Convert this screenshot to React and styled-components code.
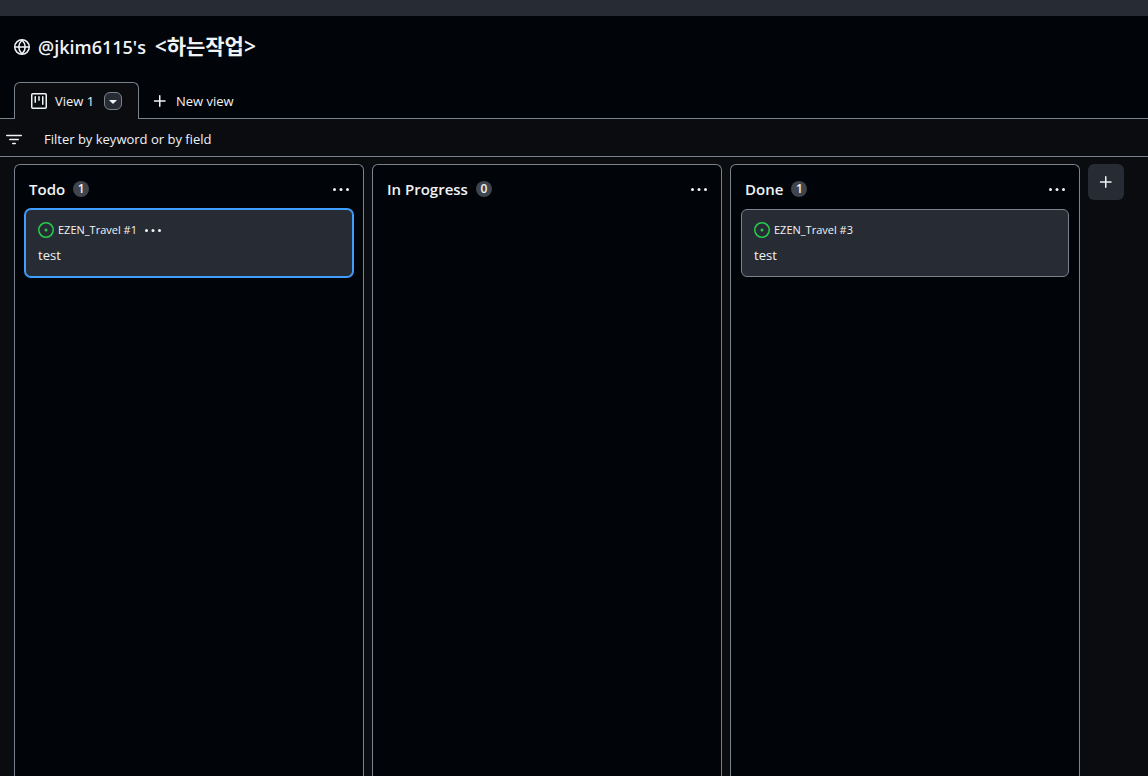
import React from "react";
import styled, { createGlobalStyle, css } from "styled-components";

const color = {
  canvas: "#0a0c10",
  inset: "#010409",
  raised: "#272b33",
  counter: "#3f444d",
  border: "#7a828e",
  text: "#f0f3f6",
  accent: "#409eff",
  open: "#26cd4d",
};

const GlobalStyle = createGlobalStyle`
  *, *::before, *::after { box-sizing: border-box; }
  body {
    margin: 0;
    background: ${color.canvas};
    color: ${color.text};
    font-family: "Open Sans", "Noto Sans CJK KR", sans-serif;
    font-size: 13px;
    line-height: 20px;
  }
  button, input { font: inherit; color: inherit; }
  svg { display: block; flex: none; }
`;

const Icon = styled.svg.attrs({ viewBox: "0 0 16 16", "aria-hidden": true })`
  width: 16px;
  height: 16px;
  fill: none;
  stroke: currentColor;
  stroke-width: 1.5;
  stroke-linecap: round;
`;

const Page = styled.div`
  display: flex;
  flex-direction: column;
  min-height: 100vh;
`;

const TopStrip = styled.div`
  height: 16px;
  background: ${color.raised};
`;

const Header = styled.header`
  display: flex;
  align-items: center;
  gap: 8px;
  height: 66px;
  padding: 0 14px 4px;
  background: ${color.inset};
`;

const Title = styled.h1`
  margin: 0;
  font-size: 18px;
  font-weight: 600;
  line-height: 30px;
`;

const ProjectName = styled.span`
  margin-left: 4px;
  font-size: 21px;
  line-height: 20px;
`;

const ViewTabs = styled.nav`
  display: flex;
  height: 37px;
  padding: 0 14px;
  background: ${color.inset};
  box-shadow: inset 0 -1px ${color.border};
`;

const ViewTab = styled.div`
  display: flex;
  align-items: center;
  justify-content: space-between;
  width: 125px;
  padding: 0 16px;
  border: 1px solid ${color.border};
  border-bottom: 0;
  border-radius: 6px 6px 0 0;
  background: ${color.canvas};
`;

const PlainButton = styled.button`
  display: flex;
  align-items: center;
  gap: 8px;
  padding: 0;
  border: 0;
  background: none;
  cursor: pointer;
`;

const NewViewButton = styled(PlainButton)`
  padding: 0 13px;
`;

const MenuToggle = styled(PlainButton)`
  justify-content: center;
  width: 18px;
  height: 18px;
  border: 1px solid ${color.border};
  border-radius: 6px;
  background: ${color.raised};
`;

const FilterBar = styled.label`
  display: flex;
  align-items: center;
  gap: 22px;
  height: 38px;
  padding: 2px 6px 0;
  border-bottom: 1px solid ${color.border};
`;

const FilterInput = styled.input`
  flex: 1;
  min-width: 0;
  padding: 0;
  border: 0;
  outline: 0;
  background: none;
  &::placeholder {
    color: ${color.text};
    opacity: 1;
  }
`;

const Board = styled.main`
  display: flex;
  flex: 1;
  gap: 8px;
  padding: 7px 14px 0;
  overflow-x: auto;
`;

const Column = styled.section`
  flex: 0 0 350px;
  padding: 0 10px;
  border: 1px solid ${color.border};
  border-bottom: 0;
  border-radius: 6px 6px 0 0;
  background: ${color.inset};
`;

const ColumnHeader = styled.header`
  display: flex;
  align-items: center;
  gap: 8px;
  height: 44px;
  padding: 4px 4px 0;
`;

const ColumnName = styled.h2`
  margin: 0;
  font-size: 15px;
  font-weight: 600;
  line-height: 24px;
`;

const Counter = styled.span`
  min-width: 16px;
  border-radius: 8px;
  background: ${color.counter};
  font-size: 12px;
  font-weight: 600;
  line-height: 16px;
  text-align: center;
`;

const ColumnMenu = styled(PlainButton)`
  margin-left: auto;
`;

const Card = styled.article`
  height: 68px;
  padding: 10px 12px;
  border: 1px solid ${color.border};
  border-radius: 6px;
  background: ${color.raised};
  ${(p) =>
    p.$selected &&
    css`
      border-color: ${color.accent};
      box-shadow: 0 0 0 1px ${color.accent};
    `}
`;

const CardMeta = styled.div`
  display: flex;
  align-items: center;
  gap: 4px;
  margin-bottom: 5px;
  font-size: 11px;
`;

const OpenIcon = styled(Icon)`
  color: ${color.open};
`;

const CardMenu = styled(PlainButton)`
  padding: 0 4px;
`;

const CardTitle = styled.a`
  display: block;
  color: ${color.text};
  text-decoration: none;
`;

const AddColumn = styled(PlainButton)`
  flex: none;
  justify-content: center;
  width: 36px;
  height: 36px;
  border-radius: 6px;
  background: ${color.raised};
`;

const GlobeIcon = () => (
  <Icon>
    <circle cx="8" cy="8" r="7.25" />
    <path d="M1 8h14M8 1C3.9 5.4 3.9 10.6 8 15C12.1 10.6 12.1 5.4 8 1Z" />
  </Icon>
);

const ProjectIcon = () => (
  <Icon>
    <rect x="0.75" y="0.75" width="14.5" height="14.5" rx="1" />
    <path d="M4.25 3.75v5.5M8 3.75v3.5M11.75 3.75v7.5" />
  </Icon>
);

const PlusIcon = () => (
  <Icon>
    <path d="M7.75 2.75v10.5M2.5 8h10.5" />
  </Icon>
);

const FilterIcon = () => (
  <Icon>
    <path d="M0.75 4.5h14.5M3.75 8.5h8.5M6.75 12.5h2.5" />
  </Icon>
);

const DotsIcon = () => (
  <Icon>
    <g fill="currentColor" stroke="none">
      <circle cx="1.5" cy="8.5" r="1.5" />
      <circle cx="8" cy="8.5" r="1.5" />
      <circle cx="14.5" cy="8.5" r="1.5" />
    </g>
  </Icon>
);

const CaretIcon = () => (
  <Icon>
    <path
      fill="currentColor"
      stroke="none"
      d="m4.4 7.4 3.4 3.4c.1.1.3.1.4 0l3.4-3.4c.2-.2.1-.4-.2-.4H4.6c-.3 0-.4.2-.2.4Z"
    />
  </Icon>
);

const columns = [
  { name: "Todo", cards: [{ ref: "EZEN_Travel #1", title: "test", selected: true }] },
  { name: "In Progress", cards: [] },
  { name: "Done", cards: [{ ref: "EZEN_Travel #3", title: "test" }] },
];

export default function App() {
  return (
    <Page>
      <GlobalStyle />
      <TopStrip />
      <Header>
        <GlobeIcon />
        <Title>
          {"@jkim6115's "}
          <ProjectName>{"<하는작업>"}</ProjectName>
        </Title>
      </Header>
      <ViewTabs>
        <ViewTab>
          <PlainButton>
            <ProjectIcon />
            View 1
          </PlainButton>
          <MenuToggle aria-label="View options">
            <CaretIcon />
          </MenuToggle>
        </ViewTab>
        <NewViewButton>
          <PlusIcon />
          New view
        </NewViewButton>
      </ViewTabs>
      <FilterBar>
        <FilterIcon />
        <FilterInput
          type="text"
          aria-label="Filter by keyword or by field"
          placeholder="Filter by keyword or by field"
        />
      </FilterBar>
      <Board>
        {columns.map((column) => (
          <Column key={column.name}>
            <ColumnHeader>
              <ColumnName>{column.name}</ColumnName>
              <Counter>{column.cards.length}</Counter>
              <ColumnMenu aria-label={`Actions for ${column.name}`}>
                <DotsIcon />
              </ColumnMenu>
            </ColumnHeader>
            {column.cards.map((card) => (
              <Card key={card.ref} $selected={card.selected}>
                <CardMeta>
                  <OpenIcon>
                    <circle cx="8" cy="8" r="7.25" />
                    <circle cx="8" cy="8" r="1.5" fill="currentColor" stroke="none" />
                  </OpenIcon>
                  <span>{card.ref}</span>
                  {card.selected && (
                    <CardMenu aria-label="Card actions">
                      <DotsIcon />
                    </CardMenu>
                  )}
                </CardMeta>
                <CardTitle href="#">{card.title}</CardTitle>
              </Card>
            ))}
          </Column>
        ))}
        <AddColumn aria-label="Add column">
          <PlusIcon />
        </AddColumn>
      </Board>
    </Page>
  );
}
